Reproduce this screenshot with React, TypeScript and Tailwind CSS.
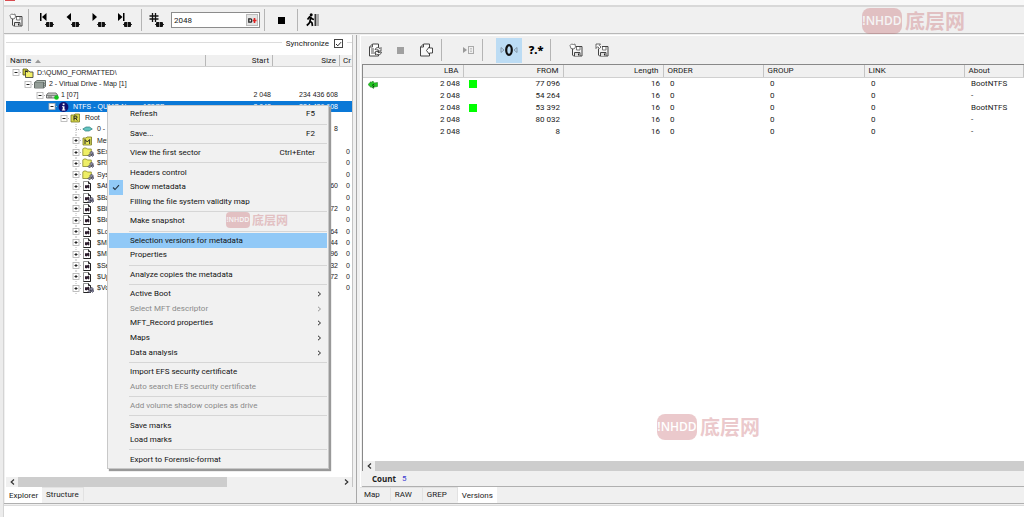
import React from "react";

type IconProps = { className?: string };

const Svg = ({ w, h, children, className = "" }: { w: number; h: number; children: React.ReactNode; className?: string }) => (
  <svg width={w} height={h} viewBox={`0 0 ${w} ${h}`} className={`shrink-0 ${className}`} aria-hidden="true">
    {children}
  </svg>
);

/* ---------- toolbar icons ---------- */

const FloppyIcon = ({ back = false }: { back?: boolean }) => (
  <Svg w={14} h={14}>
    <path d="M3.500 5.500V12l1 1h8.500V3.500H7" fill="#f4f4f4" stroke="#444" />
    <path d="M5.500 13V9.500h5.500V13" fill="#ddd" stroke="#444" />
    <path d="M9.500 10.500v2" stroke="#222" />
    <path d="M7.500 4v3h3.500V4" fill="#fff" stroke="#777" />
    {back ? (
      <path d="M1 1h4.500L4.300 2.300 6 4 4.500 5.500 2.700 3.700 1 5.500z" fill="#fff" stroke="#444" strokeWidth=".8" />
    ) : (
      <path d="M1 2.500L2.500 1l2 .5L6 1l.5 3-1.500 2-3-.5z" fill="#fff" stroke="#555" strokeWidth=".8" />
    )}
  </Svg>
);

const Plug = () => (
  <g>
    <rect x="6" y="11" width="9" height="1" fill="#333" />
    <rect x="7" y="9" width="7" height="5" rx="1" fill="#111" />
    <rect x="10" y="9" width="1" height="5" fill="#888" />
  </g>
);

const FirstIcon = () => (
  <Svg w={15} h={15}>
    <rect x="1" y="0" width="1.500" height="8" fill="#000" />
    <path d="M7.500 0v8L3 4z" fill="#000" />
    <Plug />
  </Svg>
);
const PrevIcon = () => (
  <Svg w={15} h={15}>
    <path d="M6 0v8L1.500 4z" fill="#000" />
    <Plug />
  </Svg>
);
const NextIcon = () => (
  <Svg w={15} h={15}>
    <path d="M1.500 0v8L6 4z" fill="#000" />
    <Plug />
  </Svg>
);
const LastIcon = () => (
  <Svg w={15} h={15}>
    <rect x="6" y="0" width="1.500" height="8" fill="#000" />
    <path d="M1 0v8l4.500-4z" fill="#000" />
    <Plug />
  </Svg>
);
const HashIcon = () => (
  <Svg w={15} h={15}>
    <path d="M3.500 0v9M6.500 0v9M.5 3h9M.5 6h9" stroke="#111" strokeWidth="1.300" />
    <Plug />
  </Svg>
);
const StopIcon = ({ className = "text-black" }: IconProps) => (
  <Svg w={7} h={7} className={className}>
    <rect width="7" height="7" fill="currentColor" />
  </Svg>
);
const ExitIcon = () => (
  <Svg w={14} h={14}>
    <circle cx="5.200" cy="1.800" r="1.500" fill="#000" />
    <path d="M5 3.500L4 8l2 2 .5 3M4.200 8L3 10.500 .8 12.500M1.500 6.500L3.500 4l3 2 1.500.5" fill="none" stroke="#000" strokeWidth="1.700" />
    <rect x="8.500" y="1" width="1.500" height="12" fill="#333" />
    <rect x="10" y="1" width="3" height="12" fill="#aaa" />
  </Svg>
);
const PageRefreshIcon = () => (
  <Svg w={15} h={14}>
    <path d="M4.500 1h6v12H1.500V4z" fill="#fff" stroke="#444" />
    <path d="M4.500 1v3h-3M3 6h3M3 8h3M3 10h4" fill="none" stroke="#555" />
    <path d="M7 6.500a3 3 0 0 1 5-1l1-1v3.500h-3.500l1-1a1.500 1.500 0 0 0-2-.2zM13.500 9a3 3 0 0 1-5 2l-1 1V8.500H11l-1 1a1.500 1.500 0 0 0 2-.3z" fill="#fff" stroke="#333" strokeWidth=".8" />
  </Svg>
);
const PageArrowIcon = () => (
  <Svg w={15} h={14}>
    <path d="M4.500 1h6v12H1.500V4z" fill="#f8f8f8" stroke="#444" />
    <path d="M4.500 1v3h-3" fill="none" stroke="#444" />
    <path d="M13.500 5h-3V3.500L7.500 7.500l3 4V10h3z" fill="#fff" stroke="#333" strokeWidth=".9" />
  </Svg>
);
const GotoListIcon = () => (
  <Svg w={13} h={9}>
    <path d="M1 1v6l4-3z" fill="#999" />
    <rect x="6.500" y=".5" width="5" height="7" fill="none" stroke="#aaa" />
    <path d="M8 2.500h2M8 4h2M8 5.500h2" stroke="#bbb" strokeWidth=".8" />
  </Svg>
);
const ZeroIcon = () => (
  <Svg w={18} h={14}>
    <path d="M1 4.500v5L4 7zM17 4.500v5L14 7z" fill="none" stroke="#789" strokeWidth=".8" />
    <ellipse cx="9" cy="7" rx="2.800" ry="4.800" fill="none" stroke="#111" strokeWidth="2.200" />
  </Svg>
);
const PinIcon = () => (
  <Svg w={10} h={9}>
    <path d="M0 4.500l3-3v1.500l2-2 1 2 3.500-.5v4L6 7 5.500 8.500 3 6.500V7.500z" fill="#22c822" stroke="#137013" strokeWidth=".5" />
    <path d="M4 5.500l2-1.500M5 7.500l1-2" stroke="#0a3c0a" />
  </Svg>
);

/* ---------- tree icons ---------- */

type NodeIcon = "task" | "drive" | "disk" | "info" | "root" | "item" | "meta" | "folder" | "file" | "fileLink";

const Diamonds = () => (
  <g fill="#8a8aa0" stroke="#3f3f55" strokeWidth=".6">
    <path d="M9.500 4l2 2-2 2-2-2zM7.500 7l1.500 1.500-1.500 1.500L6 8.500zM11 6.500l1 1.500-1.500 1.500L9 8z" />
  </g>
);

const Glyph = ({ icon }: { icon: NodeIcon }) => {
  switch (icon) {
    case "task":
      return (
        <Svg w={12} h={10}>
          <path d="M1 1h4l1 1v5H1z" fill="#c9c93c" stroke="#555511" strokeWidth=".8" />
          <path d="M3.500 3h3.500l1 1h3v5.500H3.500z" fill="#f3f06a" stroke="#333" strokeWidth=".8" />
          <path d="M6 4L3 3" stroke="#222" />
        </Svg>
      );
    case "drive":
      return (
        <Svg w={12} h={10}>
          <path d="M3 1.500h8.500v6l-2 1.500H.5V3.500z" fill="#b9c4bc" stroke="#4b5450" strokeWidth=".8" />
          <path d="M.5 5h9l2-1.500M.5 7h9l2-1.500M9.500 3v6M.5 3.300h9" fill="none" stroke="#4b5450" strokeWidth=".7" />
        </Svg>
      );
    case "disk":
      return (
        <Svg w={13} h={10}>
          <path d="M2 3h8l1.500 2v3H.5V5z" fill="#d2d6d3" stroke="#555" strokeWidth=".8" />
          <path d="M.5 5.300h11M2 7h4" stroke="#555" strokeWidth=".8" />
          <circle cx="10.500" cy="7.500" r="2.300" fill="#12c41c" />
        </Svg>
      );
    case "info":
      return (
        <Svg w={11} h={10}>
          <circle cx="5.500" cy="5" r="4.900" fill="#101070" />
          <rect x="4.700" y="1.500" width="1.800" height="1.700" fill="#fff" />
          <path d="M4 4.200h2.500v3.300h.8v1H3.900v-1h.8V5.100H4z" fill="#fff" />
        </Svg>
      );
    case "root":
      return (
        <Svg w={11} h={10}>
          <path d="M1 2h3l1-1h4.500v8H1z" fill="#d8d84a" stroke="#777722" strokeWidth=".8" />
          <path d="M4 7.500V3h2q1 0 1 1.200T6 5.300H4M5.700 5.300L7.300 7.500" fill="none" stroke="#222" />
        </Svg>
      );
    case "item":
      return (
        <Svg w={11} h={10}>
          <path d="M.8 5L4 3h3.500l2.800 2L7 7H3.500z" fill="#63c3bf" stroke="#2c7d80" strokeWidth=".7" />
        </Svg>
      );
    case "meta":
      return (
        <Svg w={11} h={10}>
          <path d="M1 2h3l1-1h4.500v8H1z" fill="#e4e45a" stroke="#777722" strokeWidth=".8" />
          <path d="M3 8V3.500l2.300 2.500L7.700 3.500V8" fill="none" stroke="#222" />
        </Svg>
      );
    case "folder":
      return (
        <Svg w={12} h={10}>
          <path d="M.8 2l1-1h2.500l1 1h4v6.500H.8z" fill="#eeee66" stroke="#88882c" strokeWidth=".8" />
          <Diamonds />
        </Svg>
      );
    default:
      return (
        <Svg w={12} h={10}>
          <path d="M1.500.5h5l2 2v7h-7z" fill="#fff" stroke="#777" strokeWidth=".8" />
          <path d="M6.500.5v2h2v7h-7" fill="none" stroke="#222" strokeWidth="1" />
          <path d="M3 7V4.500l1-.5 1 .500 1.500-1 .8 1V7l-1 .5-.8-1-1 1z" fill="#2a1a2a" />
          {icon === "fileLink" && <Diamonds />}
        </Svg>
      );
  }
};

const Expander = ({ kind, line }: { kind: "open" | "closed" | "none"; line: boolean }) => (
  <Svg w={12} h={11}>
    {line && <path d="M6 0v11" stroke="#b4b4b4" strokeWidth="1" strokeDasharray="1 1" />}
    <path d="M6 5.500h6" stroke="#b4b4b4" strokeDasharray="1 1" />
    {kind !== "none" && (
      <>
        <rect x="3" y="2.500" width="6" height="6" fill="#fff" stroke="#b0b0b0" strokeWidth=".8" />
        <path d={kind === "open" ? "M4.500 5.500h3" : "M4.500 5.500h3M6 4v3"} stroke="#222" />
      </>
    )}
  </Svg>
);

type Node = { level: number; icon: NodeIcon; name: string; kind?: "open" | "closed" | "none"; start?: string; size?: string; third?: string; selected?: boolean };

const INDENT = ["pl-[4px]", "pl-[16px]", "pl-[28px]", "pl-[40px]", "pl-[52px]", "pl-[64px]"];

const NODES: Node[] = [
  { level: 0, icon: "task", name: "D:\\QUMO_FORMATTED\\", kind: "open" },
  { level: 1, icon: "drive", name: "2 - Virtual Drive - Map [1]", kind: "open" },
  { level: 2, icon: "disk", name: "1 [07]", kind: "open", start: "2 048", size: "234 436 608" },
  { level: 3, icon: "info", name: "NTFS - QUMO New    128GB", kind: "open", start: "2 048", size: "234 436 608", selected: true },
  { level: 4, icon: "root", name: "Root", kind: "open" },
  { level: 5, icon: "item", name: "0 -", kind: "none", size: "8" },
  { level: 5, icon: "meta", name: "Met" },
  { level: 5, icon: "folder", name: "$Ext", third: "0" },
  { level: 5, icon: "folder", name: "$RE", third: "0" },
  { level: 5, icon: "folder", name: "Syst", third: "0" },
  { level: 5, icon: "file", name: "$Att", size: "60", third: "0" },
  { level: 5, icon: "fileLink", name: "$Bad", third: "0" },
  { level: 5, icon: "file", name: "$Bitm", size: "72", third: "0" },
  { level: 5, icon: "file", name: "$Boo", third: "0" },
  { level: 5, icon: "file", name: "$Log", size: "64", third: "0" },
  { level: 5, icon: "file", name: "$MFT", size: "44", third: "0" },
  { level: 5, icon: "file", name: "$MFT", size: "96", third: "0" },
  { level: 5, icon: "file", name: "$Sec", size: "32", third: "0" },
  { level: 5, icon: "file", name: "$Upc", size: "72", third: "0" },
  { level: 5, icon: "fileLink", name: "$Vol", third: "0" },
];

const TREE_COLS = "grid grid-cols-[minmax(0,1fr)_67px_67px_12px]";

const Tree = () => (
  <table className="flex flex-col text-[#222]">
    <thead className="block">
      <tr className={`${TREE_COLS} h-[12px] border-b border-[#d0d0d0] bg-[#f0f0f0] text-[8px] leading-[11px]`}>
        <th className="flex items-center gap-1 border-r border-[#b8b8b8] pl-1 text-left font-normal">
          Name
          <Svg w={6} h={4}>
            <path d="M0 4l3-3.500L6 4z" fill="#999" />
          </Svg>
        </th>
        <th className="border-r border-[#b8b8b8] pr-[3px] text-right font-normal">Start</th>
        <th className="border-r border-[#b8b8b8] pr-[3px] text-right font-normal">Size</th>
        <th className="overflow-hidden pl-[3px] text-left font-normal">Cr</th>
      </tr>
    </thead>
    <tbody className="grid h-[227px] auto-rows-fr font-['Liberation_Sans',Arial,sans-serif] text-[7px]">
      {NODES.map((n, i) => (
        <tr key={i} className={`${TREE_COLS} min-h-0 items-center ${n.selected ? "bg-[#0a78d7] text-white" : ""}`}>
          <td className={`flex min-w-0 items-center overflow-hidden ${INDENT[n.level]}`}>
            <Expander kind={n.kind ?? "closed"} line={n.level === 5} />
            <span className="flex w-[15px] shrink-0">
              <Glyph icon={n.icon} />
            </span>
            <span className="whitespace-pre leading-[10px]">{n.name}</span>
          </td>
          <td className="pr-[2px] text-right leading-[10px]">{n.start}</td>
          <td className="pr-[2px] text-right leading-[10px]">{n.size}</td>
          <td className="pl-[6px] leading-[10px]">{n.third}</td>
        </tr>
      ))}
    </tbody>
  </table>
);

/* ---------- context menu ---------- */

type MenuEntry = { label: string; key?: string; sub?: boolean; off?: boolean; checked?: boolean; hot?: boolean } | null;

const MENU: MenuEntry[] = [
  { label: "Refresh", key: "F5" },
  null,
  { label: "Save...", key: "F2" },
  null,
  { label: "View the first sector", key: "Ctrl+Enter" },
  null,
  { label: "Headers control" },
  { label: "Show metadata", checked: true },
  { label: "Filling the file system validity map" },
  null,
  { label: "Make snapshot" },
  null,
  { label: "Selection versions for metadata", hot: true },
  { label: "Properties" },
  null,
  { label: "Analyze copies the metadata" },
  null,
  { label: "Active Boot", sub: true },
  { label: "Select MFT descriptor", sub: true, off: true },
  { label: "MFT_Record properties", sub: true },
  { label: "Maps", sub: true },
  { label: "Data analysis", sub: true },
  null,
  { label: "Import EFS security certificate" },
  { label: "Auto search EFS security certificate", off: true },
  null,
  { label: "Add volume shadow copies as drive", off: true },
  null,
  { label: "Save marks" },
  { label: "Load marks" },
  null,
  { label: "Export to Forensic-format" },
];

const ContextMenu = () => (
  <div role="menu" className="absolute left-[107px] top-[105px] z-10 flex h-[364px] w-[222px] flex-col border border-[#c8c8c8] bg-[#f1f1f1] p-px text-[8px] shadow-[2px_2px_1px_#999]">
    {MENU.map((m, i) =>
      m === null ? (
        <div key={i} role="separator" className="flex min-h-0 flex-[1_1_0%] items-center pl-5">
          <div className="h-px flex-1 bg-[#d6d6d6]" />
        </div>
      ) : (
        <button
          key={i}
          role="menuitem"
          disabled={m.off}
          className={`flex min-h-0 flex-[3_1_0%] items-center pr-[5px] text-left leading-[12px] ${m.hot ? "bg-[#91c9f7]" : ""} ${m.off ? "text-[#8a8a8a]" : "text-[#111]"}`}
        >
          <span className="mr-[7px] flex w-[14px] shrink-0 items-center justify-center self-stretch">
            {m.checked && (
              <span className="flex h-full w-full items-center justify-center bg-[#91c9f7]">
                <Svg w={8} h={7}>
                  <path d="M1 3.500l2 2L7 1.200" fill="none" stroke="#234" strokeWidth="1.100" />
                </Svg>
              </span>
            )}
          </span>
          <span className="flex-1 whitespace-nowrap">{m.label}</span>
          {m.key && <span className="pr-[7px]">{m.key}</span>}
          {m.sub && (
            <Svg w={5} h={6}>
              <path d="M1 .8L3.500 3 1 5.200" fill="none" stroke="currentColor" strokeWidth=".9" />
            </Svg>
          )}
        </button>
      ),
    )}
  </div>
);

/* ---------- versions table ---------- */

const VERSIONS = [
  { pin: true, mark: true, from: "77 096", about: "BootNTFS" },
  { from: "54 264", about: "-" },
  { mark: true, from: "53 392", about: "BootNTFS" },
  { from: "80 032", about: "-" },
  { from: "8", about: "-" },
];

const HEADERS = [
  { label: "LBA", right: true },
  { label: "FROM", right: true },
  { label: "Length", right: true },
  { label: "ORDER" },
  { label: "GROUP" },
  { label: "LINK" },
  { label: "About" },
];

const VersionsTable = () => (
  <table className="w-full table-fixed border-collapse text-[8px] text-[#222]">
    <colgroup>
      <col className="w-[100px]" />
      <col className="w-[100px]" />
      <col className="w-[100px]" />
      <col className="w-[100px]" />
      <col className="w-[101px]" />
      <col className="w-[100px]" />
      <col />
    </colgroup>
    <thead>
      <tr className="h-[12px] bg-[#f0f0f0] leading-[12px]">
        {HEADERS.map((h) => (
          <th
            key={h.label}
            className={`border-b border-r border-b-[#d0d0d0] border-r-[#c4c4c4] px-[4px] py-0 font-normal ${h.right ? "text-right" : "text-left"}`}
          >
            {h.label}
          </th>
        ))}
      </tr>
    </thead>
    <tbody className="leading-[12px]">
      {VERSIONS.map((v) => (
        <tr key={v.from} className="h-[12px]">
          <td className="p-0 pr-[3px]">
            <div className="flex items-center justify-between pl-[5px]">
              <span className="flex">{v.pin && <PinIcon />}</span>
              <span>2 048</span>
            </div>
          </td>
          <td className="p-0 pr-[3px]">
            <div className="flex items-center justify-between pl-[6px]">
              <span className={v.mark ? "h-2 w-2 bg-[#00ff00]" : ""} />
              <span>{v.from}</span>
            </div>
          </td>
          <td className="p-0 pr-[3px] text-right">16</td>
          <td className="p-0 pl-[7px]">0</td>
          <td className="p-0 pl-[7px]">0</td>
          <td className="p-0 pl-[7px]">0</td>
          <td className="p-0 pl-[7px]">{v.about}</td>
        </tr>
      ))}
    </tbody>
  </table>
);

/* ---------- shared chrome ---------- */

const Divider = () => <span className="h-[22px] w-px shrink-0 bg-[#b4b4b4]" />;

const ToolButton = ({ label, children, className = "w-[26px]" }: { label: string; children: React.ReactNode; className?: string }) => (
  <button aria-label={label} title={label} className={`flex h-full shrink-0 items-center justify-center ${className}`}>
    {children}
  </button>
);

const ScrollArrow = ({ right = false }: { right?: boolean }) => (
  <button aria-label={right ? "Scroll right" : "Scroll left"} className="flex w-3 shrink-0 items-center justify-center">
    <Svg w={5} h={6}>
      <path d={right ? "M1 .5L3.800 3 1 5.500" : "M4 .5L1.200 3 4 5.500"} fill="none" stroke="#333" strokeWidth="1.200" />
    </Svg>
  </button>
);

const Tab = ({ label, active = false, wide = false }: { label: string; active?: boolean; wide?: boolean }) => (
  <button
    role="tab"
    aria-selected={active}
    className={`pl-[4px] ${wide ? "pr-[10px]" : "pr-[4px]"} ${active ? "bg-white pt-[2px]" : "mb-[2px] border-r border-t border-[#e2e2e2] bg-[#f0f0f0]"}`}
  >
    {label}
  </button>
);

const Watermark = ({ className, small = false }: { className: string; small?: boolean }) => (
  <div
    aria-hidden="true"
    className={`pointer-events-none absolute z-20 flex items-center font-['Noto_Sans_CJK_SC',sans-serif] text-[#c8686e] opacity-35 ${small ? "gap-[2px]" : "gap-[3px]"} ${className}`}
  >
    <span
      className={`flex items-center justify-center bg-[#c8686e] font-['Open_Sans',sans-serif] font-semibold text-white ${small ? "h-4 w-6 rounded-[4px] text-[7px]" : "h-[26px] w-10 rounded-[8px] text-[12px]"}`}
    >
      !NHDD
    </span>
    <span className={`font-bold ${small ? "text-[12px] leading-4" : "text-[20px] leading-[26px]"}`}>底层网</span>
  </div>
);

export default function App() {
  return (
    <div className="relative flex min-h-screen overflow-hidden bg-[#f0f0f0] font-[Roboto,'Noto_Sans',sans-serif] text-[8px] text-[#222]">
      <div className="w-1 shrink-0 border-r border-[#d4d4d4] bg-[#ececec]" />
      <div className="flex min-w-0 flex-1 flex-col">
        <div className="h-[7px] shrink-0 border-b-2 border-[#d8d8d8] bg-[#f8f8f8]">
          <div className="ml-px h-px w-[10px] bg-[#d84a4f]" />
        </div>

        <header className="flex h-[27px] shrink-0 items-center border-b border-[#b8b8b8]">
          <ToolButton label="Save" className="w-6">
            <FloppyIcon />
          </ToolButton>
          <Divider />
          <div className="flex h-full items-center px-1">
            <ToolButton label="First sector">
              <FirstIcon />
            </ToolButton>
            <ToolButton label="Previous sector">
              <PrevIcon />
            </ToolButton>
            <ToolButton label="Next sector">
              <NextIcon />
            </ToolButton>
            <ToolButton label="Last sector">
              <LastIcon />
            </ToolButton>
          </div>
          <Divider />
          <ToolButton label="Go to sector" className="w-[29px]">
            <HashIcon />
          </ToolButton>
          <div className="flex h-4 w-[89px] items-center border border-[#8c8c8c] bg-white pr-px">
            <input aria-label="Sector" defaultValue="2048" className="h-full min-w-0 flex-1 pl-[2px] text-[8px] outline-none" />
            <button aria-label="Decimal" className="flex h-3 w-3 items-center justify-center border border-[#bbb] bg-[#e4e4e4]">
              <Svg w={9} h={5}>
                <path d="M.8.8h1.700q1.300 0 1.300 1.700T2.500 4.200H.8z" fill="none" stroke="#222" strokeWidth="1.300" />
                <path d="M6.500 0v5M5 2.500h3.500" stroke="#e02020" strokeWidth="1.600" />
              </Svg>
            </button>
          </div>
          <div className="flex h-full items-center pl-1">
            <Divider />
            <ToolButton label="Stop" className="w-8">
              <StopIcon />
            </ToolButton>
            <Divider />
            <ToolButton label="Exit" className="w-[30px]">
              <ExitIcon />
            </ToolButton>
          </div>
        </header>

        <main className="grid flex-1 grid-cols-[352fr_668fr] pt-px">
          <section className="flex min-w-0 flex-col pl-px pr-[3px]">
            <div className="flex flex-1 flex-col border-r border-[#c4c4c4] bg-white pl-px">
              <div className="flex h-[20px] shrink-0 items-start">
                <span className="mt-[7px] h-px flex-1 bg-[#dcdcdc]" />
                <label className="flex items-center gap-[5px] px-1 pt-[3px] leading-[11px]">
                  Synchronize
                  <span className="relative flex h-[9px] w-[9px] items-center justify-center">
                    <input type="checkbox" defaultChecked className="peer h-[9px] w-[9px] appearance-none border border-[#444] bg-white" />
                    <Svg w={7} h={6} className="pointer-events-none invisible absolute peer-checked:visible">
                      <path d="M1 3l1.800 1.800L6 1.200" fill="none" stroke="#222" />
                    </Svg>
                  </span>
                </label>
                <span className="mt-[7px] h-px w-[5px] bg-[#dcdcdc]" />
              </div>
              <Tree />
              <div className="flex-1" />
              <div className="flex h-[10px] shrink-0 bg-[#f0f0f0]">
                <ScrollArrow />
                <div className="flex flex-1">
                  <div className="w-[65%] bg-[#cdcdcd]" />
                </div>
                <ScrollArrow right />
              </div>
            </div>
            <div role="tablist" className="flex h-4 shrink-0 leading-3">
              <Tab label="Explorer" active />
              <Tab label="Structure" />
            </div>
          </section>

          <section className="flex min-w-0 flex-col border-l border-[#a8a8a8] pl-[3px]">
            <div className="flex flex-1 flex-col border-l border-t border-white pl-px">
              <div className="flex h-[28px] shrink-0 items-center">
                <ToolButton label="Rescan">
                  <PageRefreshIcon />
                </ToolButton>
                <ToolButton label="Stop" className="w-6">
                  <StopIcon className="text-[#a0a0a0]" />
                </ToolButton>
                <ToolButton label="Export" className="w-[29px]">
                  <PageArrowIcon />
                </ToolButton>
                <Divider />
                <ToolButton label="Go to record" className="w-[40px] pl-3">
                  <GotoListIcon />
                </ToolButton>
                <div className="flex h-full items-center gap-[13px]">
                  <Divider />
                  <button aria-label="Zero" className="flex h-[25px] w-[26px] items-center justify-center bg-[#bcdcf4]">
                    <ZeroIcon />
                  </button>
                </div>
                <button aria-label="Mask" className="w-[28px] text-center font-['Open_Sans',sans-serif] text-[11px] font-extrabold leading-[14px] text-black">
                  ?.*
                </button>
                <Divider />
                <div className="flex h-full pl-3">
                  <ToolButton label="Save versions">
                    <FloppyIcon />
                  </ToolButton>
                  <ToolButton label="Load versions">
                    <FloppyIcon back />
                  </ToolButton>
                </div>
              </div>
              <div className="flex flex-1 flex-col border-l border-t border-[#888] bg-white">
                <VersionsTable />
                <div className="flex-1" />
                <div className="flex h-[10px] shrink-0 bg-[#f0f0f0]">
                  <ScrollArrow />
                  <div className="flex-1 bg-[#cdcdcd]" />
                </div>
              </div>
              <div className="flex h-4 shrink-0 items-center gap-[6px] border-b border-[#b0b0b0] pl-[10px] leading-[12px]">
                <span className="font-['Open_Sans',sans-serif] font-bold">Count</span>
                <span className="text-[#3838d0]">5</span>
              </div>
            </div>
            <div role="tablist" className="flex h-4 shrink-0 leading-3">
              <Tab label="Map" wide />
              <Tab label="RAW" wide />
              <Tab label="GREP" wide />
              <Tab label="Versions" active />
            </div>
          </section>
        </main>

        <footer className="h-[14px] shrink-0 border-t border-[#b0b0b0] pt-px">
          <div className="h-full border-t border-[#dcdcdc] bg-white" />
        </footer>
      </div>

      <ContextMenu />
      <Watermark className="left-[862px] top-[8px]" />
      <Watermark className="left-[226px] top-[212px]" small />
      <Watermark className="left-[657px] top-[414px]" />
    </div>
  );
}
